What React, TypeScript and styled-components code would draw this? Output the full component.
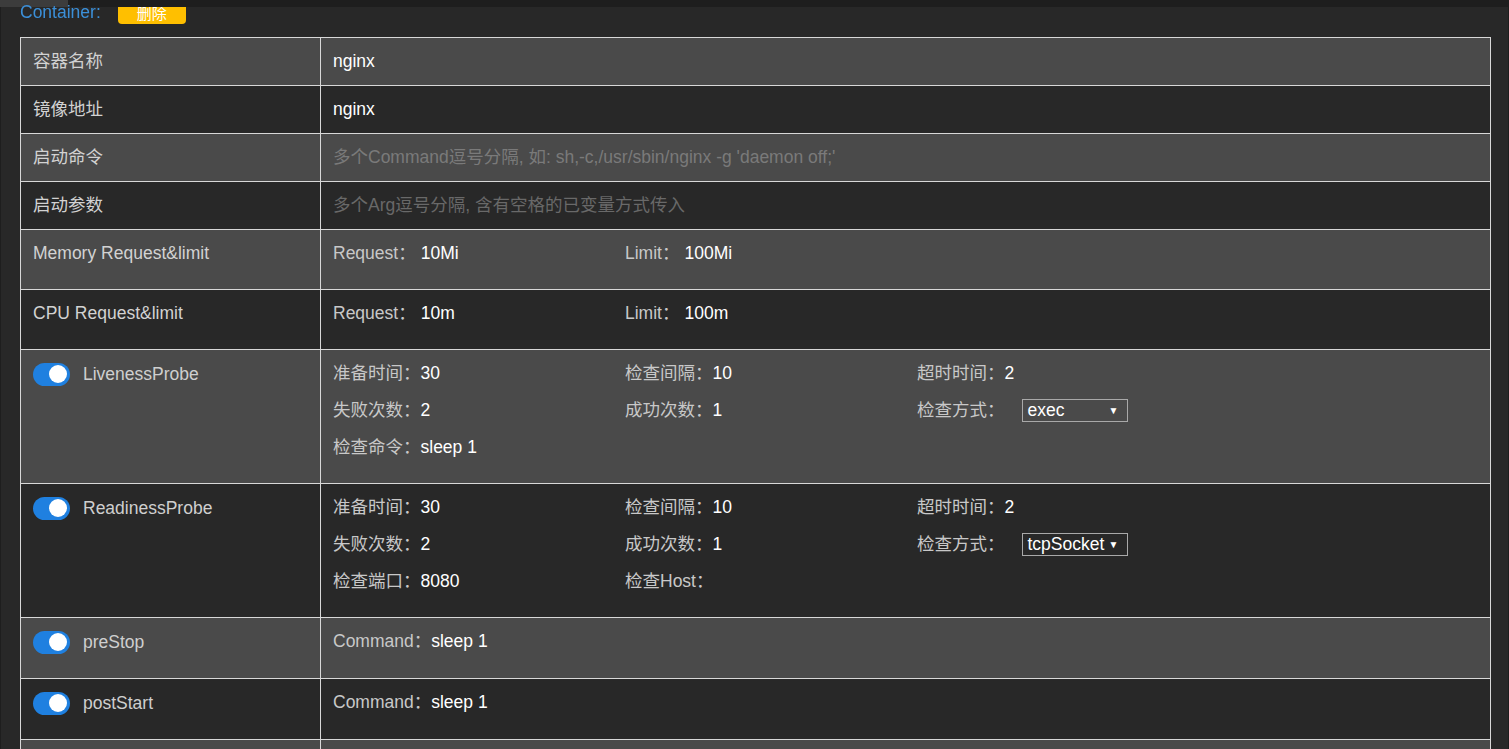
import React from 'react';
import styled, { createGlobalStyle } from 'styled-components';

const GlobalStyle = createGlobalStyle`
  html, body {
    margin: 0;
    overflow: hidden;
  }
  body {
    background:
      linear-gradient(#1e1e1e, #1e1e1e) left top / 1px 100% no-repeat,
      linear-gradient(#1e1e1e, #1e1e1e) right top / 1px 100% no-repeat,
      #282828;
    font-family: "Liberation Sans", "Noto Sans CJK SC", sans-serif;
    font-size: 17.5px;
    color: #fff;
  }
`;

const TopBar = styled.div`
  position: fixed;
  top: 0;
  left: 0;
  right: 0;
  height: 7px;
  background: linear-gradient(to right, #3c3c3c 68px, #1e1e1e 68px);
  z-index: 10;
`;

const Page = styled.div`
  padding: 0 18px 0 20px;
`;

const Header = styled.div`
  display: flex;
  align-items: center;
  height: 24px;
  margin-bottom: 13px;
`;

const Title = styled.span`
  position: relative;
  z-index: 11;
  color: #3b8fd8;
  line-height: 24px;
`;

const DangerButton = styled.button`
  margin-left: 17px;
  width: 68px;
  height: 24px;
  border: none;
  border-radius: 4px;
  background: #ffbf00;
  color: #fff;
  font-family: "Liberation Sans", "Noto Sans CJK SC", sans-serif;
  font-size: 15px;
  padding: 0;
`;

const Grid = styled.table`
  width: 100%;
  border-collapse: collapse;
  table-layout: fixed;
`;

const KeyCol = styled.col`
  width: 300px;
`;

const Row = styled.tr<{ $shade: boolean }>`
  background: ${p => (p.$shade ? '#4a4a4a' : '#282828')};
`;

const KeyCell = styled.td<{ $tall?: boolean }>`
  border: 1px solid #d8d8d8;
  padding: 12px 12px ${p => (p.$tall ? 24 : 12)}px;
  vertical-align: top;
  color: #d2d2d2;
  line-height: 23px;
`;

const ValCell = styled.td<{ $tall?: boolean }>`
  border: 1px solid #d8d8d8;
  padding: 12px 12px ${p => (p.$tall ? 24 : 12)}px;
  vertical-align: top;
  line-height: 23px;
`;

const KeyInner = styled.div`
  display: flex;
  align-items: center;
  gap: 13px;
  line-height: 24px;
  color: #cfcfcf;
`;

const Switch = styled.span`
  position: relative;
  flex: none;
  width: 37px;
  height: 23px;
  border-radius: 12px;
  background: #1f80e0;
  &::after {
    content: '';
    position: absolute;
    top: 2.5px;
    right: 3px;
    width: 18px;
    height: 18px;
    border-radius: 50%;
    background: #fff;
  }
`;

const TextInput = styled.input`
  display: block;
  width: 100%;
  height: 23px;
  padding: 0;
  border: none;
  outline: none;
  background: transparent;
  color: #fff;
  font: inherit;
  line-height: 23px;
  &::placeholder {
    color: rgba(170, 170, 170, 0.5);
  }
`;

const FieldGrid = styled.div`
  display: grid;
  grid-template-columns: repeat(3, 292px);
  row-gap: 14px;
`;

const Field = styled.div`
  display: flex;
  align-items: center;
  height: 23px;
  white-space: nowrap;
`;

const FieldLabel = styled.span`
  color: #c8c8c8;
`;

const FieldValue = styled.span<{ $gap?: number }>`
  color: #fff;
  margin-left: ${p => p.$gap ?? 0}px;
`;

const SelectBox = styled.div`
  box-sizing: border-box;
  margin-left: 17px;
  width: 106px;
  height: 23px;
  border: 1px solid #a9a9a9;
  display: flex;
  align-items: center;
  justify-content: space-between;
  padding: 0 8px 0 5px;
  color: #fff;
`;

const Caret = styled.span`
  font-size: 10px;
  line-height: 1;
`;

const Spacer = styled.div`
  height: 23px;
`;

type Item = { label: string; value?: string; select?: string; gap?: number };

const Fields = ({ items }: { items: Item[] }) => (
  <FieldGrid>
    {items.map(it => (
      <Field key={it.label}>
        <FieldLabel>{it.label}</FieldLabel>
        {it.select ? (
          <SelectBox>
            <span>{it.select}</span>
            <Caret>▼</Caret>
          </SelectBox>
        ) : (
          <FieldValue $gap={it.gap}>{it.value}</FieldValue>
        )}
      </Field>
    ))}
  </FieldGrid>
);

const probeItems = (type: string, last: Item[]): Item[] => [
  { label: '准备时间：', value: '30' },
  { label: '检查间隔：', value: '10' },
  { label: '超时时间：', value: '2' },
  { label: '失败次数：', value: '2' },
  { label: '成功次数：', value: '1' },
  { label: '检查方式：', select: type },
  ...last,
];

const Toggled = ({ name }: { name: string }) => (
  <KeyInner>
    <Switch />
    {name}
  </KeyInner>
);

export default function App() {
  return (
    <>
      <GlobalStyle />
      <TopBar />
      <Page>
        <Header>
          <Title>Container:</Title>
          <DangerButton>删除</DangerButton>
        </Header>
        <Grid>
          <colgroup>
            <KeyCol />
            <col />
          </colgroup>
          <tbody>
            <Row $shade>
              <KeyCell>容器名称</KeyCell>
              <ValCell>nginx</ValCell>
            </Row>
            <Row $shade={false}>
              <KeyCell>镜像地址</KeyCell>
              <ValCell>nginx</ValCell>
            </Row>
            <Row $shade>
              <KeyCell>启动命令</KeyCell>
              <ValCell>
                <TextInput placeholder="多个Command逗号分隔, 如: sh,-c,/usr/sbin/nginx -g 'daemon off;'" />
              </ValCell>
            </Row>
            <Row $shade={false}>
              <KeyCell>启动参数</KeyCell>
              <ValCell>
                <TextInput placeholder="多个Arg逗号分隔, 含有空格的已变量方式传入" />
              </ValCell>
            </Row>
            <Row $shade>
              <KeyCell>Memory Request&amp;limit</KeyCell>
              <ValCell $tall>
                <Fields
                  items={[
                    { label: 'Request：', value: '10Mi', gap: 5 },
                    { label: 'Limit：', value: '100Mi', gap: 5 },
                  ]}
                />
              </ValCell>
            </Row>
            <Row $shade={false}>
              <KeyCell>CPU Request&amp;limit</KeyCell>
              <ValCell $tall>
                <Fields
                  items={[
                    { label: 'Request：', value: '10m', gap: 5 },
                    { label: 'Limit：', value: '100m', gap: 5 },
                  ]}
                />
              </ValCell>
            </Row>
            <Row $shade>
              <KeyCell $tall>
                <Toggled name="LivenessProbe" />
              </KeyCell>
              <ValCell $tall>
                <Fields items={probeItems('exec', [{ label: '检查命令：', value: 'sleep 1' }])} />
              </ValCell>
            </Row>
            <Row $shade={false}>
              <KeyCell $tall>
                <Toggled name="ReadinessProbe" />
              </KeyCell>
              <ValCell $tall>
                <Fields
                  items={probeItems('tcpSocket', [
                    { label: '检查端口：', value: '8080' },
                    { label: '检查Host：', value: '' },
                  ])}
                />
              </ValCell>
            </Row>
            <Row $shade>
              <KeyCell $tall>
                <Toggled name="preStop" />
              </KeyCell>
              <ValCell $tall>
                <Fields items={[{ label: 'Command：', value: 'sleep 1' }]} />
              </ValCell>
            </Row>
            <Row $shade={false}>
              <KeyCell $tall>
                <Toggled name="postStart" />
              </KeyCell>
              <ValCell $tall>
                <Fields items={[{ label: 'Command：', value: 'sleep 1' }]} />
              </ValCell>
            </Row>
            <Row $shade>
              <KeyCell $tall>
                <Spacer />
              </KeyCell>
              <ValCell $tall>
                <Spacer />
              </ValCell>
            </Row>
          </tbody>
        </Grid>
      </Page>
    </>
  );
}
